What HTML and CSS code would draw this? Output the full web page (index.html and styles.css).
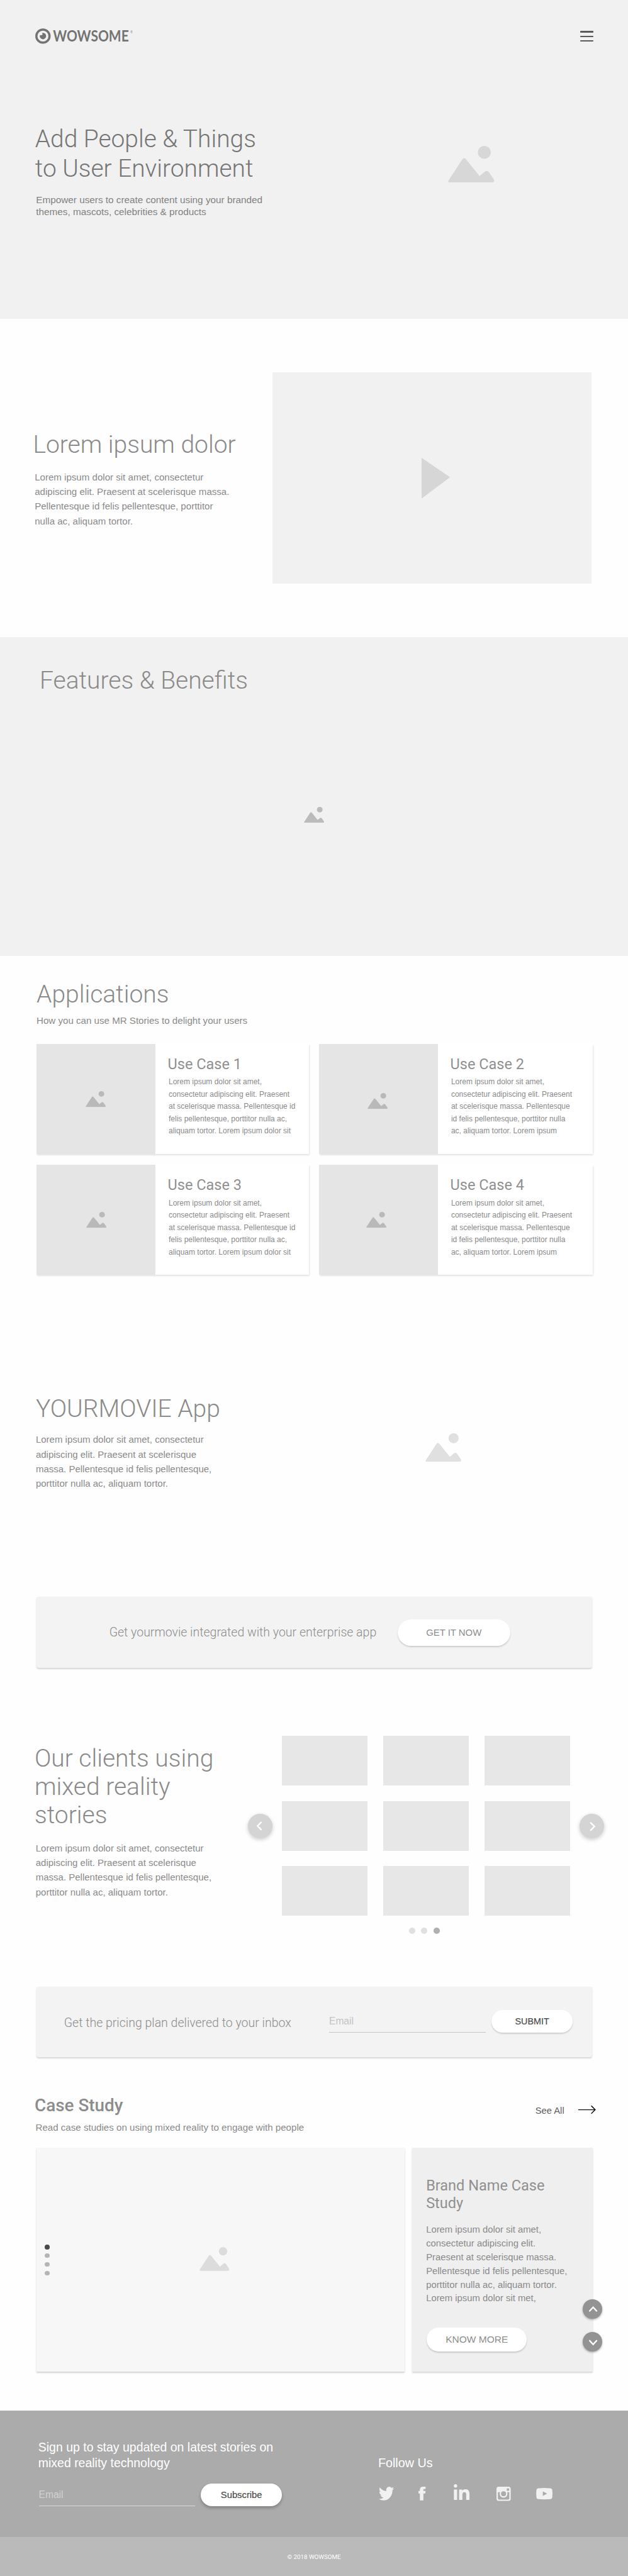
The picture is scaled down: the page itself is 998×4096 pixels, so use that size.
FILE: index.html
```
<!DOCTYPE html>
<html lang="en">
<head>
<meta charset="utf-8">
<title>Wowsome</title>
<link rel="stylesheet" href="styles.css">
</head>
<body>
<svg class="defs" aria-hidden="true">
  <symbol id="picture" viewBox="0 0 94 76" preserveAspectRatio="none">
    <circle cx="74" cy="13.3" r="13.3"/>
    <path d="M3 73 L31 29.5 Q32.8 26.5 35 29.5 L64 66 L77.2 54.6 Q79 53.4 80.8 55.2 L91 70 Q92 73 90.5 73 Z" stroke="currentColor" stroke-width="5" stroke-linejoin="round"/>
  </symbol>
</svg>

<section class="hero">
  <header class="topbar">
    <svg class="logo" viewBox="0 0 200 33">
      <circle cx="15.7" cy="15.9" r="13.4" fill="none" stroke="currentColor" stroke-width="4.5"/>
      <path d="M14.6 9.4 A6.5 6.5 0 1 1 9.3 14.8 Q10.4 13.6 11.6 13.8 Q13.6 14.4 14.6 13 Q15.4 11.4 13.9 10.3 Z"/>
      <text class="logo-name" x="36.3" y="26.7" textLength="154.5" lengthAdjust="spacingAndGlyphs">WOWSOME</text>
      <text class="logo-mark" x="194" y="10">®</text>
    </svg>
    <div class="menu"><i></i><i></i><i></i></div>
  </header>
  <div class="hero-body">
    <div class="hero-text">
      <h1>Add People &amp; Things<br>to User Environment</h1>
      <p>Empower users to create content using your branded<br>themes, mascots, celebrities &amp; products</p>
    </div>
    <svg class="pic pic-hero"><use href="#picture"/></svg>
  </div>
</section>

<section class="intro">
  <div class="intro-text">
    <h2>Lorem ipsum dolor</h2>
    <p class="copy">Lorem ipsum dolor sit amet, consectetur<br>adipiscing elit. Praesent at scelerisque massa.<br>Pellentesque id felis pellentesque, porttitor<br>nulla ac, aliquam tortor.</p>
  </div>
  <div class="video">
    <svg class="play" viewBox="0 0 58 83"><path d="M0 0 L58 39.5 L0 83 Z"/></svg>
  </div>
</section>

<section class="features">
  <h2>Features &amp; Benefits</h2>
  <svg class="pic pic-features"><use href="#picture"/></svg>
</section>

<section class="apps">
  <h2>Applications</h2>
  <p class="lead">How you can use MR Stories to delight your users</p>
  <div class="cards">
    <article class="card">
      <div class="thumb"><svg class="pic pic-card"><use href="#picture"/></svg></div>
      <div class="card-text"><h3>Use Case 1</h3><p>Lorem ipsum dolor sit amet,<br>consectetur adipiscing elit. Praesent<br>at scelerisque massa. Pellentesque id<br>felis pellentesque, porttitor nulla ac,<br>aliquam tortor. Lorem ipsum dolor sit</p></div>
    </article>
    <article class="card">
      <div class="thumb thumb-b"><svg class="pic pic-card"><use href="#picture"/></svg></div>
      <div class="card-text"><h3>Use Case 2</h3><p>Lorem ipsum dolor sit amet,<br>consectetur adipiscing elit. Praesent<br>at scelerisque massa. Pellentesque<br>id felis pellentesque, porttitor nulla<br>ac, aliquam tortor. Lorem ipsum</p></div>
    </article>
    <article class="card">
      <div class="thumb thumb-c"><svg class="pic pic-card"><use href="#picture"/></svg></div>
      <div class="card-text"><h3>Use Case 3</h3><p>Lorem ipsum dolor sit amet,<br>consectetur adipiscing elit. Praesent<br>at scelerisque massa. Pellentesque id<br>felis pellentesque, porttitor nulla ac,<br>aliquam tortor. Lorem ipsum dolor sit</p></div>
    </article>
    <article class="card">
      <div class="thumb thumb-d"><svg class="pic pic-card"><use href="#picture"/></svg></div>
      <div class="card-text"><h3>Use Case 4</h3><p>Lorem ipsum dolor sit amet,<br>consectetur adipiscing elit. Praesent<br>at scelerisque massa. Pellentesque<br>id felis pellentesque, porttitor nulla<br>ac, aliquam tortor. Lorem ipsum</p></div>
    </article>
  </div>
</section>

<section class="movie">
  <div class="movie-text">
    <h2>YOURMOVIE App</h2>
    <p class="copy">Lorem ipsum dolor sit amet, consectetur<br>adipiscing elit. Praesent at scelerisque<br>massa. Pellentesque id felis pellentesque,<br>porttitor nulla ac, aliquam tortor.</p>
  </div>
  <svg class="pic pic-movie"><use href="#picture"/></svg>
</section>

<div class="banner banner-get">
  <p>Get yourmovie integrated with your enterprise app</p>
  <button class="pill pill-get">GET IT NOW</button>
</div>

<section class="clients">
  <div class="clients-text">
    <h2>Our clients using<br>mixed reality<br>stories</h2>
    <p class="copy">Lorem ipsum dolor sit amet, consectetur<br>adipiscing elit. Praesent at scelerisque<br>massa. Pellentesque id felis pellentesque,<br>porttitor nulla ac, aliquam tortor.</p>
  </div>
  <div class="carousel">
    <div class="slides">
      <button class="arrow"><svg viewBox="0 0 50 50"><path d="M26.8 17.5 L19.5 24.8 L26.8 32.2"/></svg></button>
      <div class="logos"><i></i><i></i><i></i><i></i><i></i><i></i><i></i><i></i><i></i></div>
      <button class="arrow"><svg viewBox="0 0 50 50"><path d="M22.8 18.5 L30.3 26 L22.8 33.5"/></svg></button>
    </div>
    <div class="pager"><i></i><i></i><i class="on"></i></div>
  </div>
</section>

<div class="banner banner-plan">
  <p>Get the pricing plan delivered to your inbox</p>
  <div class="field">Email</div>
  <button class="pill pill-submit">SUBMIT</button>
</div>

<section class="cases">
  <div class="cases-head">
    <div>
      <h2>Case Study</h2>
      <p class="lead">Read case studies on using mixed reality to engage with people</p>
    </div>
    <div class="see-all">
      <span>See All</span>
      <svg viewBox="0 0 37 18"><path d="M0 8.5 H34.5 M26.5 .5 L34.5 8.5 L26.5 16.5"/></svg>
    </div>
  </div>
  <div class="case-row">
    <div class="case-image">
      <div class="bullets"><i class="on"></i><i></i><i></i><i></i></div>
      <svg class="pic pic-case"><use href="#picture"/></svg>
    </div>
    <div class="case-text">
      <h3>Brand Name Case<br>Study</h3>
      <p>Lorem ipsum dolor sit amet,<br>consectetur adipiscing elit.<br>Praesent at scelerisque massa.<br>Pellentesque id felis pellentesque,<br>porttitor nulla ac, aliquam tortor.<br>Lorem ipsum dolor sit met,</p>
      <button class="pill pill-more">KNOW MORE</button>
      <div class="updown">
        <button><svg viewBox="0 0 39 39"><path d="M13 22.5 L20 15 L27 22.5"/></svg></button>
        <button><svg viewBox="0 0 39 39"><path d="M13 16.5 L20 24 L27 16.5"/></svg></button>
      </div>
    </div>
  </div>
</section>

<footer>
  <div class="foot-main">
    <div class="signup">
      <h4>Sign up to stay updated on latest stories on<br>mixed reality technology</h4>
      <div class="signup-form">
        <div class="field">Email</div>
        <button class="pill pill-subscribe">Subscribe</button>
      </div>
    </div>
    <div class="follow">
      <h4>Follow Us</h4>
      <div class="social">
        <svg class="s-tw" viewBox="0 2.1 24 19.6" preserveAspectRatio="none"><path d="M23.953 4.57a10 10 0 01-2.825.775 4.958 4.958 0 002.163-2.723c-.951.555-2.005.959-3.127 1.184a4.92 4.92 0 00-8.384 4.482C7.69 8.095 4.067 6.13 1.64 3.162a4.822 4.822 0 00-.666 2.475c0 1.71.87 3.213 2.188 4.096a4.904 4.904 0 01-2.228-.616v.06a4.923 4.923 0 003.946 4.827 4.996 4.996 0 01-2.212.085 4.936 4.936 0 004.604 3.417 9.867 9.867 0 01-6.102 2.105c-.39 0-.779-.023-1.17-.067a13.995 13.995 0 007.557 2.209c9.053 0 13.998-7.496 13.998-13.985 0-.21 0-.42-.015-.63A9.935 9.935 0 0024 4.59z"/></svg>
        <svg class="s-fb" viewBox="0 0 14.5 28"><path d="M14.5 0V4.8H11.8C10.4 4.8 10.1 5.4 10.1 6.7V8.8H14.5L14 13.9H10.1V28H2.9V13.9H0V8.8H2.9V6C2.9 2 5.2 0 9.2 0Z"/></svg>
        <svg class="s-in" viewBox="0 0 32.5 32.5"><circle cx="3.7" cy="3.5" r="3.5"/><path d="M.4 10.8H7V32H.4ZM11 10.8H17.3V13.6C18.4 11.6 20.6 10.3 23.6 10.3C30.4 10.3 32.2 14.4 32.2 20.4V32H25.5V21.6C25.5 18.6 25 16.2 21.8 16.2S17.7 18.8 17.7 21.6V32H11Z"/></svg>
        <svg class="s-ig" viewBox="0 0 29 29"><path fill-rule="evenodd" d="M4.5 0H24.5A4.5 4.5 0 0 1 29 4.5V24.5A4.5 4.5 0 0 1 24.5 29H4.5A4.5 4.5 0 0 1 0 24.5V4.5A4.5 4.5 0 0 1 4.5 0ZM21 3.4V8.2H25.8V3.4ZM2.9 11.2V24A2.2 2.2 0 0 0 5.1 26.2H23.9A2.2 2.2 0 0 0 26.1 24V11.2H21.6A7.9 7.9 0 1 1 7.3 11.2ZM14.4 9.2A5.1 5.1 0 1 0 14.4 19.4A5.1 5.1 0 1 0 14.4 9.2Z"/></svg>
        <svg class="s-yt" viewBox="0 0 33.5 23.5"><path fill-rule="evenodd" d="M5 .6Q16.7-.6 28.5 .6Q32.4 .8 32.9 4.6Q33.8 11.7 32.9 19Q32.4 22.6 28.5 22.9Q16.7 24 5 22.9Q1.1 22.6 .6 19Q-.3 11.7 .6 4.6Q1.1 .8 5 .6ZM13.6 7V16.4L22.4 11.7Z"/></svg>
      </div>
    </div>
  </div>
  <div class="foot-copy">© 2018 WOWSOME</div>
</footer>
</body>
</html>
```
FILE: styles.css
```
/* 1rem stands for 100 design units */
html { font-size: 77.946px; }
* { box-sizing: border-box; margin: 0; padding: 0; }
body {
  background: #fefefe;
  font-family: "Liberation Sans", Arial, sans-serif;
  font-size: .19rem;
  color: #8a8a8a;
  white-space: nowrap;
  overflow-x: hidden;
}
button { border: 0; font-family: inherit; display: flex; align-items: center; justify-content: center; }
i { display: block; }
.defs { display: none; }
svg { display: block; fill: currentColor; overflow: visible; }
h1, h2 { font: 300 .5rem/.6rem Roboto, sans-serif; color: #8a8a8a; }
h3 { font: 400 .302rem/.36rem Roboto, sans-serif; color: #909090; }
.copy { font-size: .1925rem; line-height: .3rem; }
.lead { font-size: .194rem; line-height: .24rem; }

.hero { height: 6.5rem; background: #f1f1f1; }
.topbar { height: 1.18rem; padding: .58rem .71rem 0 .72rem; display: flex; justify-content: space-between; }
.logo { width: 2rem; height: .33rem; color: #737373; }
.logo-name { font: 700 30.5px Lato, sans-serif; }
.logo-mark { font: 6px "Liberation Sans", sans-serif; }
.menu { width: .27rem; padding-top: .055rem; display: flex; flex-direction: column; gap: .061rem; }
.menu i { height: .032rem; background: #5a5a5a; border-radius: .01rem; }
.hero-body { display: flex; justify-content: space-between; padding: 1.366rem 2.735rem 0 .716rem; }
h1 { font-size: .499rem; line-height: .602rem; color: #757575; }
.hero-text p { margin: .197rem 0 0 .02rem; font-size: .1965rem; line-height: .244rem; color: #828282; }
.pic-hero { width: .94rem; height: .75rem; margin-top: .43rem; color: #d7d7d7; }

.intro { height: 6.5rem; padding: 1.1rem .74rem 0 .673rem; display: flex; justify-content: space-between; }
.intro-text { padding-top: 1.177rem; }
.intro-text .copy { margin: .201rem 0 0 .035rem; font-size: .1935rem; }
.video { width: 6.51rem; height: 4.3rem; background: #f1f1f1; padding: 1.738rem 0 0 3.046rem; }
.play { width: .58rem; height: .83rem; color: #d6d6d6; }

.features { height: 6.5rem; background: #f1f1f1; padding: .589rem 0 0 .808rem; }
.pic-features { width: .41rem; height: .325rem; margin: 2.271rem 0 0 5.392rem; color: #bbb; }

.apps { height: 6.7rem; padding: .483rem .72rem 0 .74rem; }
.apps h2, .apps .lead { margin-left: .005rem; }
.apps .lead { margin-top: .126rem; }
.cards { margin-top: .342rem; display: grid; grid-template-columns: 5.56rem 5.58rem; grid-auto-rows: 2.25rem; gap: .218rem .2rem; }
.card { display: flex; background: #fff; box-shadow: .01rem .02rem .03rem rgba(0, 0, 0, .1); }
.thumb { width: 2.43rem; background: #e5e5e5; display: flex; align-items: center; justify-content: center; }
.thumb-b { padding: .1rem .04rem 0 0; }
.thumb-c { padding-left: .02rem; }
.thumb-d { padding-right: .09rem; }
.pic-card { width: .41rem; height: .325rem; color: #b9b9b9; }
.card-text { padding: .236rem 0 0 .25rem; }
.card-text p { margin: .067rem 0 0 .018rem; font-size: .154rem; line-height: .2505rem; }

.movie { height: 6.38rem; padding: 2.247rem 3.4rem 0 .73rem; display: flex; justify-content: space-between; }
.movie .copy { margin-top: .17rem; }
.pic-movie { width: .73rem; height: .585rem; margin-top: .79rem; color: #e0e0e0; }

.banner { width: 11.33rem; height: 1.445rem; margin-left: .74rem; background: #f3f3f3; border-radius: .05rem; box-shadow: 0 .02rem .03rem rgba(0, 0, 0, .16); display: flex; }
.banner p { font: 300 .2503rem/.3rem Roboto, sans-serif; color: #8c8c8c; }
.pill { background: #fff; border-radius: .3rem; box-shadow: 0 .025rem .03rem rgba(0, 0, 0, .16); color: #8c8c8c; }
.banner-get p { padding: .574rem 0 0 1.488rem; width: 7.366rem; }
.pill-get { width: 2.295rem; height: .545rem; margin-top: .45rem; font-size: .191rem; }

.clients { height: 6.5rem; padding: 1.385rem .49rem 0 .705rem; display: flex; justify-content: space-between; }
.clients-text { padding-top: .18rem; }
.clients h2 { line-height: .58rem; }
.clients .copy { margin: .218rem 0 0 .023rem; }
.slides { display: flex; align-items: center; justify-content: space-between; width: 7.26rem; }
.logos { display: grid; grid-template-columns: repeat(3, 1.745rem); grid-auto-rows: 1.013rem; gap: .317rem; }
.logos i { background: #e7e7e7; }
.arrow { width: .5rem; height: .5rem; border-radius: 50%; background: #d4d4d4; box-shadow: 0 .03rem .08rem rgba(0, 0, 0, .2); color: #fff; }
.arrow svg { width: .5rem; height: .5rem; fill: none; stroke: currentColor; stroke-width: 3; stroke-linecap: round; }
.pager { margin: .24rem 0 0 3.287rem; display: flex; gap: .123rem; }
.pager i { width: .125rem; height: .125rem; border-radius: 50%; background: #e0e0e0; }
.pager .on { background: #b0b0b0; }

.banner-plan p { padding: .59rem 0 0 .565rem; width: 5.97rem; }
.field { width: 3.19rem; font-size: .2rem; line-height: .24rem; border-bottom: .018rem solid #c3c3c3; color: #c3c3c3; }
.banner-plan .field { height: .34rem; margin: .595rem .124rem 0 0; }
.pill-submit, .pill-subscribe { width: 1.65rem; height: .46rem; color: #4a4a4a; -webkit-text-stroke: .2px #4a4a4a; }
.pill-submit { margin-top: .475rem; font-size: .184rem; }

.cases { height: 7.208rem; padding: .765rem .71rem 0 .705rem; }
.cases-head { display: flex; justify-content: space-between; height: 1.073rem; }
.cases h2 { font: 500 .358rem/.44rem Roboto, sans-serif; color: #8c8c8c; }
.cases .lead { margin: .118rem 0 0 .02rem; }
.see-all { display: flex; gap: .29rem; padding-top: .2rem; font-size: .19rem; line-height: .24rem; color: #5e5e5e; margin-right: -.07rem; }
.see-all svg { width: .37rem; height: .18rem; margin-top: .013rem; fill: none; stroke: #111; stroke-width: 1.9; }
.case-row { display: flex; gap: .155rem; margin-left: .035rem; }
.case-image { width: 7.505rem; height: 4.572rem; background: #f7f7f7; box-shadow: 0 .02rem .03rem rgba(0, 0, 0, .18); display: flex; padding-left: .167rem; }
.bullets { padding-top: 1.978rem; display: flex; flex-direction: column; gap: .079rem; width: 3.158rem; }
.bullets i { width: .104rem; height: .1rem; border-radius: 50%; background: #b5b5b5; }
.bullets .on { background: #4a4a4a; }
.pic-case { width: .61rem; height: .487rem; margin-top: 2.037rem; color: #dcdcdc; }
.case-text { position: relative; width: 3.69rem; height: 4.572rem; background: #efefef; box-shadow: 0 .02rem .03rem rgba(0, 0, 0, .16); padding: .609rem 0 0 .288rem; }
.case-text h3 { line-height: .355rem; }
.case-text p { margin-top: .23rem; font-size: .1905rem; line-height: .28rem; }
.pill-more { width: 2.045rem; height: .495rem; margin: .443rem 0 0 .012rem; font-size: .199rem; }
/* scroll buttons overlap the panel's right edge */
.updown { position: absolute; left: 3.486rem; top: 3.102rem; display: flex; flex-direction: column; gap: .273rem; }
.updown button { width: .395rem; height: .395rem; border-radius: 50%; background: #939393; color: #fff; box-shadow: 0 .02rem .04rem rgba(0, 0, 0, .3); }
.updown svg { width: .39rem; height: .39rem; fill: none; stroke: currentColor; stroke-width: 3; stroke-linecap: round; }

.foot-main { height: 2.579rem; background: #ababab; padding: .585rem 0 0 .79rem; display: flex; color: #fff; }
.signup { width: 6.92rem; }
h4 { font-weight: 400; font-size: .25rem; line-height: .32rem; }
.signup h4 { margin-left: -.01rem; }
.signup-form { display: flex; gap: .118rem; margin-top: .26rem; }
.signup-form .field { height: .34rem; margin-top: .12rem; color: #d2d2d2; border-color: #d8d8d8; }
.pill-subscribe { font-size: .19rem; box-shadow: 0 .04rem .07rem rgba(0, 0, 0, .25); }
.follow { padding-top: .32rem; }
.follow h4 { font-size: .2535rem; }
.social { display: flex; margin: .27rem 0 0 .017rem; color: #f1f1f1; }
.s-tw { width: .31rem; height: .28rem; margin-top: .05rem; }
.s-fb { width: .145rem; height: .28rem; margin: .05rem 0 0 .5rem; }
.s-in { width: .325rem; height: .325rem; margin-left: .565rem; }
.s-ig { width: .29rem; height: .29rem; margin: .056rem 0 0 .555rem; }
.s-yt { width: .335rem; height: .235rem; margin: .087rem 0 0 .515rem; }
.foot-copy { height: .793rem; background: #bababa; color: #fff; font: .1256rem/.82rem Roboto, sans-serif; text-align: center; }
```
